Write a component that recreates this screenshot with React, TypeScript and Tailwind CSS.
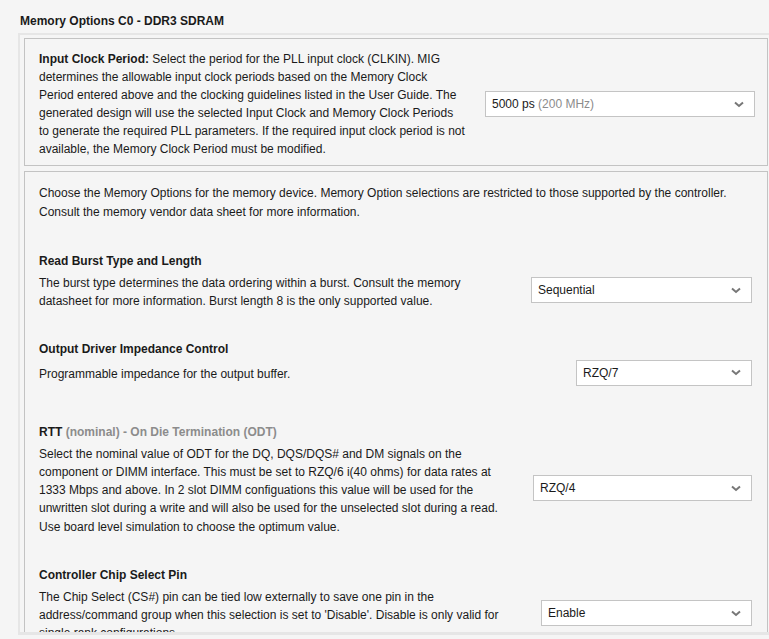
import { ReactNode } from 'react';

function Chevron() {
  return (
    <svg width="10" height="7" viewBox="0 0 10 7" className="shrink-0">
      <path d="M1 1.5 L5 5 L9 1.5" fill="none" stroke="#777" strokeWidth="2" />
    </svg>
  );
}

function Select({ value, hint, width }: { value: string; hint?: string; width: string }) {
  return (
    <div
      className={`${width} h-[26px] shrink-0 bg-white border border-[#c4c4c4] flex items-center justify-between pl-[6px] pr-[10px] text-[12px] text-[#1a1a1a]`}
    >
      <span>
        {value}
        {hint && <span className="text-[#8c8c8c]"> {hint}</span>}
      </span>
      <Chevron />
    </div>
  );
}

// lines are broken by hand, as the reference wraps them
function Lines({ lines }: { lines: ReactNode[] }) {
  return (
    <>
      {lines.map((l, i) => (
        <div key={i} className="whitespace-nowrap">
          {l}
        </div>
      ))}
    </>
  );
}

function Option({
  title,
  lines,
  select,
  className,
}: {
  title: ReactNode;
  lines: string[];
  select: ReactNode;
  className?: string;
}) {
  return (
    <div className={className}>
      <div className="font-bold leading-[18px]">{title}</div>
      <div className="mt-1 flex items-center">
        <div className="w-[480px] leading-[18.25px]">
          <Lines lines={lines} />
        </div>
        <div className="flex-1 flex justify-end -translate-y-[2px]">{select}</div>
      </div>
    </div>
  );
}

export default function App() {
  return (
    <div className="min-h-[639px] bg-[#f5f5f5] text-[12px] text-[#1a1a1a] font-['Liberation_Sans',Arial,sans-serif] overflow-hidden">
      <div className="pl-[20px] pt-[13px] h-[33px] font-bold leading-[16px]">Memory Options C0 - DDR3 SDRAM</div>

      <div className="ml-[18px] w-[760px] border-l-2 border-t-2 border-b-[3px] border-[#e6e6e6]">
        <div className="h-[597px] overflow-hidden pl-[4px] pt-[3px]">
          <div className="w-[744px] border border-[#c3c3c3] pl-[14px] pr-[12px] pt-[11px] pb-[7px] flex items-center">
            <div className="w-[440px] leading-[18px]">
              <Lines
                lines={[
                  <>
                    <span className="font-bold">Input Clock Period:</span> Select the period for the PLL input clock (CLKIN). MIG
                  </>,
                  'determines the allowable input clock periods based on the Memory Clock',
                  'Period entered above and the clocking guidelines listed in the User Guide. The',
                  'generated design will use the selected Input Clock and Memory Clock Periods',
                  'to generate the required PLL parameters. If the required input clock period is not',
                  'available, the Memory Clock Period must be modified.',
                ]}
              />
            </div>
            <div className="flex-1 flex justify-end">
              <Select value="5000 ps" hint="(200 MHz)" width="w-[270px]" />
            </div>
          </div>

          <div className="mt-[5px] w-[744px] border border-[#c3c3c3] pl-[14px] pr-[15px] pt-[12px] pb-[40px]">
            <div className="leading-[19px]">
              <Lines
                lines={[
                  'Choose the Memory Options for the memory device. Memory Option selections are restricted to those supported by the controller.',
                  'Consult the memory vendor data sheet for more information.',
                ]}
              />
            </div>

            <Option
              className="mt-[30px]"
              title="Read Burst Type and Length"
              select={<Select value="Sequential" width="w-[221px]" />}
              lines={[
                'The burst type determines the data ordering within a burst. Consult the memory',
                'datasheet for more information. Burst length 8 is the only supported value.',
              ]}
            />

            <Option
              className="mt-[29px]"
              title="Output Driver Impedance Control"
              select={<Select value="RZQ/7" width="w-[176px]" />}
              lines={['Programmable impedance for the output buffer.']}
            />

            <Option
              className="mt-[35px]"
              title={
                <>
                  RTT <span className="text-[#8c8c8c]">(nominal) - On Die Termination (ODT)</span>
                </>
              }
              select={<Select value="RZQ/4" width="w-[219px]" />}
              lines={[
                'Select the nominal value of ODT for the DQ, DQS/DQS# and DM signals on the',
                'component or DIMM interface. This must be set to RZQ/6 i(40 ohms) for data rates at',
                '1333 Mbps and above. In 2 slot DIMM configuations this value will be used for the',
                'unwritten slot during a write and will also be used for the unselected slot during a read.',
                'Use board level simulation to choose the optimum value.',
              ]}
            />

            <Option
              className="mt-[30px]"
              title="Controller Chip Select Pin"
              select={<Select value="Enable" width="w-[211px]" />}
              lines={[
                'The Chip Select (CS#) pin can be tied low externally to save one pin in the',
                "address/command group when this selection is set to 'Disable'. Disable is only valid for",
                'single rank configurations.',
              ]}
            />
          </div>
        </div>
      </div>
    </div>
  );
}
